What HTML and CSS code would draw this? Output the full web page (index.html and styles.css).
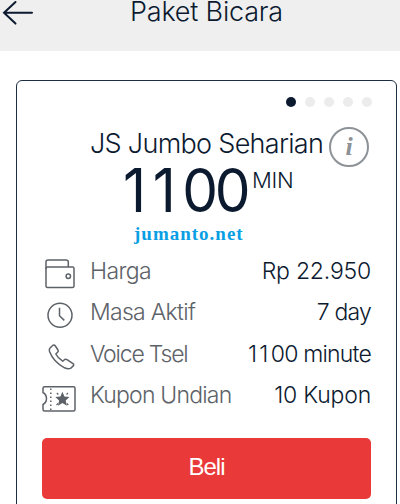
FILE: index.html
```html
<!DOCTYPE html>
<html lang="id">
<head>
  <meta charset="UTF-8" />
  <meta name="viewport" content="width=device-width, initial-scale=1.0"/>
  <title>Paket Bicara</title>
  <link rel="stylesheet" href="styles.css">
</head>
<body>
  <header class="topbar">
    <svg class="back" width="32" height="26" viewBox="0 0 32 26">
      <path d="M13.5 2 L2 12.8 L13.5 23.6 M2 12.8 H30"/>
    </svg>
    <h1>Paket Bicara</h1>
  </header>

  <main class="card">
    <div class="dots">
      <span class="dot active"></span>
      <span class="dot"></span>
      <span class="dot"></span>
      <span class="dot"></span>
      <span class="dot"></span>
    </div>

    <div class="name-row">
      <h2>JS Jumbo Seharian</h2>
      <span class="info">i</span>
    </div>

    <div class="quota">
      <span class="amount"><span class="ones">11</span>00</span>
      <span class="unit">MIN</span>
    </div>

    <div class="site">jumanto.net</div>

    <ul class="details">
      <li>
        <svg class="icon" width="36" height="34" viewBox="0 0 36 34">
          <rect x="4" y="12" width="28" height="20.500" rx="1.5"/>
          <path d="M4 14 V7 Q4 5 6 5 H24 Q26.300 5 26.300 7 V12"/>
          <circle cx="26.300" cy="21.300" r="2.200"/>
        </svg>
        <span class="label harga">Harga</span>
        <span class="value price">Rp 22.950</span>
      </li>
      <li>
        <svg class="icon" width="36" height="34" viewBox="0 0 36 34">
          <circle cx="18" cy="19.300" r="12"/>
          <path d="M17.500 11.700 V19.700 L22.300 24.400"/>
        </svg>
        <span class="label masa">Masa Aktif</span>
        <span class="value day">7 day</span>
      </li>
      <li>
        <svg class="icon" width="36" height="34" viewBox="0 0 36 34">
          <path transform="translate(0 2)" d="M8 8 L11 5.200 Q12.300 4.500 13.200 5.800 L16 10 Q16.700 11.300 15.600 12.300 L13.800 14 Q15.800 18 20.700 21.200 L22.700 19.500 Q23.800 18.800 25 19.600 L31 23.600 Q32.300 24.700 31.200 25.900 L28.800 28.200 Q26.500 29.700 22.500 27.800 Q11.500 22 7.500 11.500 Q6.900 9.300 8 8 Z"/>
        </svg>
        <span class="label voice">Voice Tsel</span>
        <span class="value minute"><span class="num">11</span>00 minute</span>
      </li>
      <li>
        <svg class="icon" width="36" height="34" viewBox="0 0 36 34">
          <g transform="translate(-0.5 2.500)">
            <path d="M1.500 10 V6.700 Q1.500 5.200 3 5.200 H32 Q33.500 5.200 33.500 6.700 V28 Q33.500 29.500 32 29.500 H3 Q1.500 29.500 1.500 28 V23 Q5 21 5 17 Q5 13 1.500 11 Z"/>
            <path class="perforation" d="M9.300 7 V29"/>
            <path class="rays" d="M15.300 11.500 l1.500 1.500 M26.500 11.500 l-1.500 1.500 M15 23.500 l1.500 -1.500 M26.800 23.500 l-1.500 -1.500"/>
            <path class="star" d="M20.900 10.200 L22.900 14.900 L28 15.500 L24.200 18.900 L25.300 24.300 L20.900 21.500 L16.500 24.300 L17.600 18.900 L13.800 15.500 L18.900 14.900 Z"/>
          </g>
        </svg>
        <span class="label kupon">Kupon Undian</span>
        <span class="value coupons">10 Kupon</span>
      </li>
    </ul>

    <button class="btn-beli">Beli</button>
  </main>
</body>
</html>
```

FILE: styles.css
```css
* {
  box-sizing: border-box;
}

body {
  margin: 0;
  height: 504px;
  overflow: hidden;
  background-color: #fff;
  font-family: Inter, 'Liberation Sans', sans-serif;
  font-weight: 300;
  color: #0c1a30;
}

h1, h2, ul {
  margin: 0;
  padding: 0;
  font-weight: 300;
}

.topbar {
  display: flex;
  height: 51px;
  padding-left: 2px;
  background: #efefef;
}

.back {
  fill: none;
  stroke: #0c1a30;
  stroke-width: 2;
  stroke-linecap: round;
}

h1 {
  margin-left: 96px;
  font-size: 27px;
  line-height: 23px;
  letter-spacing: -0.2px;
  white-space: nowrap;
}

.card {
  width: 381px;
  height: 440px;
  margin: 29px 0 0 16px;
  padding: 0 25px;
  border: 1.5px solid #1c2e42;
  border-radius: 6px;
}

.dots {
  display: flex;
  justify-content: flex-end;
  gap: 9px;
  margin-right: -1px;
  padding-top: 16px;
}

.dot {
  width: 10px;
  height: 10px;
  border-radius: 50%;
  background: #ececec;
}

.active {
  background: #0c1a30;
}

.name-row {
  display: flex;
  justify-content: space-between;
  height: 58px;
  padding: 20px 2px 0 48px;
}

h2 {
  font-size: 27px;
  line-height: 34px;
  letter-spacing: -0.7px;
  white-space: nowrap;
}

.info {
  flex: none;
  width: 40px;
  height: 40px;
  border: 2px solid #8d9297;
  border-radius: 50%;
  color: #8d9297;
  font: italic bold 26px/36px 'Liberation Serif', serif;
  text-align: center;
}

.quota {
  display: flex;
  height: 57px;
  padding-left: 81px;
}

.amount {
  width: 127px;
  height: 50px;
  font-size: 60px;
  font-weight: 400;
  line-height: 50px;
  letter-spacing: -3.5px;
  white-space: nowrap;
  transform: scaleX(0.945);
  transform-origin: left;
}

.ones {
  letter-spacing: 7px;
}

.unit {
  margin-left: 2px;
  font-size: 22px;
  line-height: 30px;
  letter-spacing: -0.3px;
}

.site {
  height: 29px;
  padding-left: 92px;
  color: #0a9fe4;
  font: bold 19px/24px 'Liberation Serif', serif;
  letter-spacing: 1px;
}

.details {
  list-style: none;
}

.details li {
  display: flex;
  align-items: center;
  height: 41.5px;
  font-size: 23px;
  white-space: nowrap;
}

.icon {
  flex: none;
  fill: none;
  stroke: #5d6268;
  stroke-width: 1.5;
  stroke-linejoin: round;
}

.perforation {
  stroke-dasharray: 1.5 2.5;
}

.rays {
  stroke-width: 1.2;
}

.star {
  fill: #5d6268;
  stroke: none;
}

.label, .value {
  padding-bottom: 2px;
}

.label {
  margin-left: 12px;
  color: #5d6268;
}

.harga {
  letter-spacing: -0.6px;
}

.masa {
  letter-spacing: -0.7px;
}

.voice {
  letter-spacing: -1.2px;
}

.kupon {
  letter-spacing: -0.8px;
}

.value {
  margin-left: auto;
}

.price, .coupons {
  letter-spacing: -0.2px;
}

.day, .minute {
  letter-spacing: -0.8px;
}

.num {
  letter-spacing: 2.4px;
}

.btn-beli {
  display: block;
  width: 329px;
  height: 61px;
  margin-top: 21px;
  padding: 0 0 3px;
  border: none;
  border-radius: 5px;
  background: #e93939;
  color: #fff;
  font: 24px 'Liberation Sans', sans-serif;
  letter-spacing: -1px;
}
```
